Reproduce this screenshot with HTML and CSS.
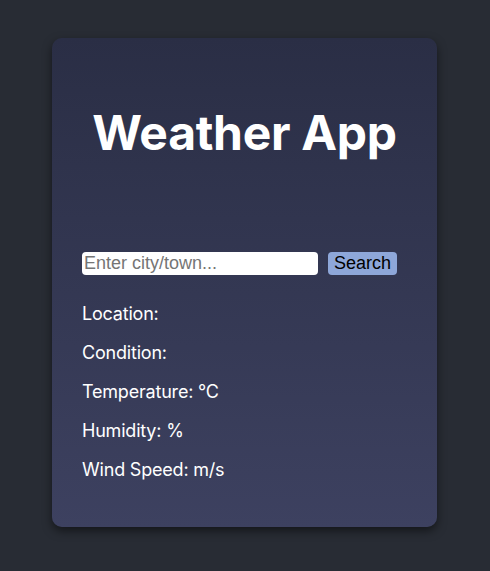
FILE: index.html
```html
<!DOCTYPE html>
<html>
<head>
<meta charset="utf-8">
<link rel="stylesheet" href="styles.css">
</head>
<body>
<div class="card">
  <h1 class="title">Weather App</h1>
  <div class="search">
    <input class="city" type="text" placeholder="Enter city/town...">
    <button class="btn">Search</button>
  </div>
  <div class="info">
    <p class="row">Location: </p>
    <p class="row">Condition: </p>
    <p class="row">Temperature: °C</p>
    <p class="row">Humidity: %</p>
    <p class="row">Wind Speed: m/s</p>
  </div>
</div>
</body>
</html>
```
FILE: styles.css
```css
html, body {
  margin: 0;
  padding: 0;
}
body {
  background: #282c34;
  font-family: Inter, "Noto Sans", sans-serif;
  color: #ffffff;
  padding-top: 38px;
  min-height: 571px;
  box-sizing: border-box;
}
.card {
  width: 385px;
  height: 489px;
  margin: 0 auto;
  box-sizing: border-box;
  padding: 30px;
  border-radius: 10px;
  background: linear-gradient(to bottom, #2a2e45, #3d4160);
  box-shadow: 0 4px 10px rgba(0, 0, 0, 0.5);
  position: relative;
  left: -0.5px;
}
.title {
  font-size: 48px;
  font-weight: 700;
  text-align: center;
  margin: 36px 0 0 0;
  line-height: 58px;
  letter-spacing: -0.3px;
}
.search {
  display: flex;
  align-items: center;
  gap: 10px;
  margin-top: 90px;
}
.city {
  width: 236px;
  height: 23px;
  box-sizing: border-box;
  border: none;
  border-radius: 4px;
  padding: 0 2px;
  font-family: "Liberation Sans", Arial, sans-serif;
  font-size: 18px;
  background: #ffffff;
  color: #000;
  outline: none;
}
.city::placeholder {
  color: #757575;
}
.btn {
  height: 23px;
  padding: 0 6px;
  border: none;
  border-radius: 4px;
  background: #8ea7d9;
  color: #000;
  font-family: "Liberation Sans", Arial, sans-serif;
  font-size: 18px;
  line-height: 23px;
}
.info {
  margin-top: 28px;
}
.row {
  font-size: 18px;
  line-height: 21px;
  margin: 18px 0;
  letter-spacing: -0.2px;
}
```
